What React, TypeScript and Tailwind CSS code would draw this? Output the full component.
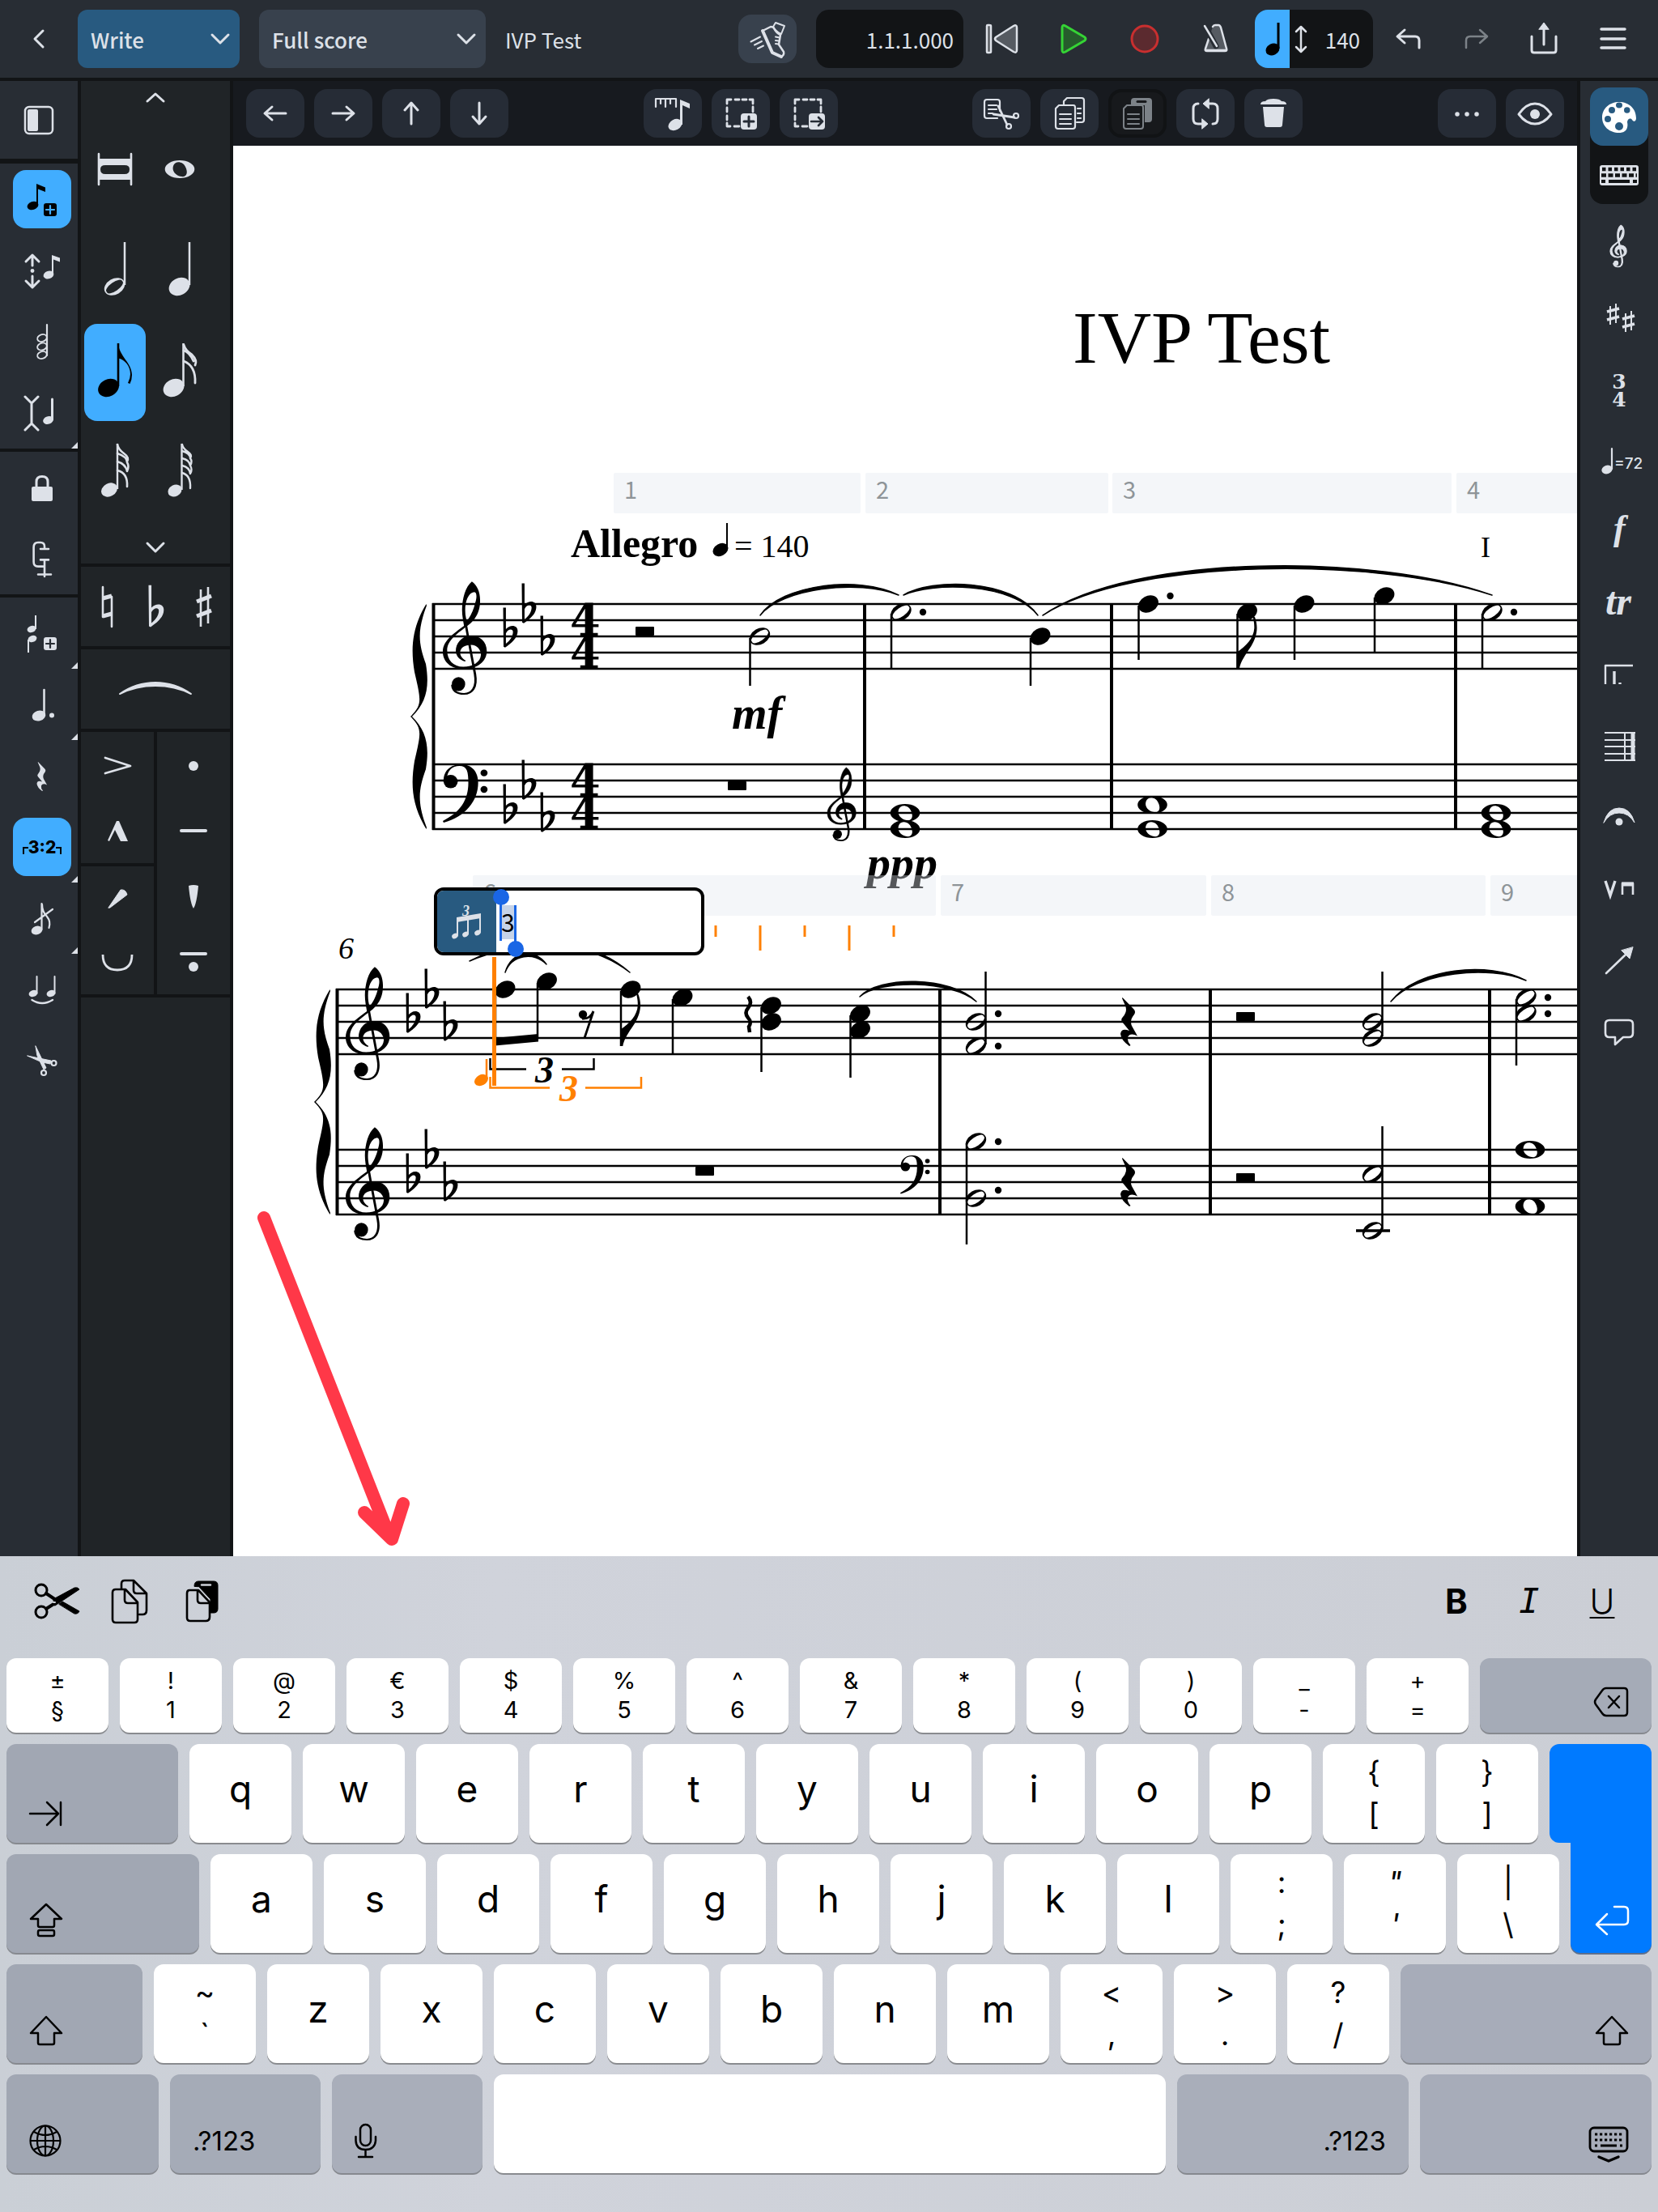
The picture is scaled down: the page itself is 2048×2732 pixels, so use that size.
import React, { useState } from 'react';

/**
 * Score editor: write mode with note toolbox, score canvas and on-screen keyboard
 */

const TOOL_FONT = "font-['Noto_Sans_CJK_SC','Noto_Sans',sans-serif]";

type Pt = [number, number];

interface IconProps {
  w?: number;
  h?: number;
  sw?: number;
  className?: string;
  children: React.ReactNode;
}

function Icon({ w = 72, h = 72, sw = 3, className = '', children }: IconProps) {
  return (
    <svg
      width={w}
      height={h}
      viewBox={`0 0 ${w} ${h}`}
      fill="none"
      stroke="currentColor"
      strokeWidth={sw}
      strokeLinecap="round"
      strokeLinejoin="round"
      className={`shrink-0 overflow-visible ${className}`}
      aria-hidden="true"
    >
      {children}
    </svg>
  );
}

/* ---------- music glyphs ---------- */

function Head({ x, y, rx = 13, ry = 10, a = -28 }: { x: number; y: number; rx?: number; ry?: number; a?: number }) {
  return <ellipse cx={x} cy={y} rx={rx} ry={ry} transform={`rotate(${a} ${x} ${y})`} fill="currentColor" stroke="none" />;
}

function HalfHead({ x, y, s = 1 }: { x: number; y: number; s?: number }) {
  return (
    <path
      transform={`translate(${x} ${y}) scale(${s}) rotate(-30)`}
      fill="currentColor"
      stroke="none"
      fillRule="evenodd"
      d="M-13.5,0A13.5,9.8 0 1 1 13.5,0A13.5,9.8 0 1 1 -13.5,0ZM-11.6,1A11.8,4.6 -5 1 0 11.6,-1A11.8,4.6 -5 1 0 -11.6,1Z"
    />
  );
}

function WholeHead({ x, y, s = 1 }: { x: number; y: number; s?: number }) {
  return (
    <path
      transform={`translate(${x} ${y}) scale(${s})`}
      fill="currentColor"
      stroke="none"
      fillRule="evenodd"
      d="M-18.3,0A18.3,11 0 1 1 18.3,0A18.3,11 0 1 1 -18.3,0ZM-8,-4C-6,-11 4,-10 7,-3C11,5 8,10 2,9C-5,8 -10,2 -8,-4Z"
    />
  );
}

function Stem({ x, y1, y2, w = 2.5 }: { x: number; y1: number; y2: number; w?: number }) {
  return <line x1={x} x2={x} y1={y1} y2={y2} stroke="currentColor" strokeWidth={w} strokeLinecap="butt" />;
}

function TrebleClef({ x, y, s = 1, bold = 0 }: { x: number; y: number; s?: number; bold?: number }) {
  return (
    <g transform={`translate(${x} ${y}) scale(${0.4847 * s} ${0.3444 * s}) translate(-138 -771)`}>
      <path
        fill="currentColor"
        stroke="currentColor"
        strokeWidth={bold}
        fillRule="evenodd"
        d="M212,458C196,475 187,520 187,560C187,580 190,600 192,617C165,645 138,670 138,710C138,748 160,772 190,772C226,772 250,745 250,708C250,672 232,652 208,652C185,655 171,680 171,708C172,725 180,740 195,745L196,741C186,733 182,722 182,712C183,695 193,685 210,685C226,685 236,705 235,722C234,747 215,764 190,764C165,764 149,740 149,705C149,668 175,645 207,610C226,585 233,560 233,525C233,495 225,470 212,458ZM199,600C190,560 196,500 218,496C226,497 224,520 221,532C216,562 209,582 199,600Z"
      />
      <path d="M195,600L202,655L220,790C226,838 212,861 192,861C174,861 163,850 162,828" fill="none" stroke="currentColor" strokeWidth={6 + bold} />
      <ellipse cx="178" cy="826" rx="17" ry="25" fill="currentColor" stroke="none" />
    </g>
  );
}

function BassClef({ x, y, s = 1 }: { x: number; y: number; s?: number }) {
  return (
    <g transform={`translate(${x} ${y}) scale(${0.4847 * s} ${0.3444 * s}) translate(-138 -1113)`} fill="currentColor" stroke="none">
      <ellipse cx="158" cy="1175" rx="18" ry="24" />
      <path d="M140,1178C138,1140 155,1113 185,1113C212,1113 228,1140 228,1178C228,1245 195,1300 140,1322L138,1316C183,1285 203,1240 203,1180C203,1140 200,1119 180,1119C162,1119 150,1135 148,1165Z" />
      <ellipse cx="243" cy="1144" rx="9" ry="12" />
      <ellipse cx="243" cy="1203" rx="9" ry="12" />
    </g>
  );
}

function Flat({ x, y, s = 1 }: { x: number; y: number; s?: number }) {
  return (
    <path
      transform={`translate(${x} ${y}) scale(${0.4847 * s} ${0.3444 * s}) translate(-294 -656)`}
      fill="currentColor"
      stroke="none"
      fillRule="evenodd"
      d="M293,553H300L300,630C312,612 330,616 330,637C330,662 314,680 298,696L294,693ZM300,645V682C310,672 318,655 318,640C318,628 306,628 300,645Z"
    />
  );
}

function QuarterRest({ x, y, s = 1 }: { x: number; y: number; s?: number }) {
  return (
    <path
      transform={`translate(${x} ${y}) scale(${s})`}
      fill="currentColor"
      stroke="none"
      d="M2.5,0L17,15Q19,18 17,21Q11,28 14,35L21,47.5Q12,43 9,49Q8,54 12.5,59L11,60Q1,53 0,45Q1,37 11,41L2,30Q0,27 3,24Q9,17 6,10L2,1Z"
    />
  );
}

function DownFlag({ x, y }: { x: number; y: number }) {
  return (
    <path
      transform={`translate(${x} ${y})`}
      fill="currentColor"
      d="M-1,0V-20.3C11,-28 20,-38 20.8,-50C21,-56 20,-60 19,-65L21.5,-64C25,-54 26,-43 17,-28C9,-16 4,-9 2.3,0Z"
    />
  );
}

function Brace({ x, y }: { x: number; y: number }) {
  const half = 'M19.5,0C2,29 0,54 5,84C13,119 15,124 0,139L2,139C19,122 24,104 19,74C10,49 8,34 20,2Z';
  return (
    <g fill="currentColor">
      <path transform={`translate(${x} ${y})`} d={half} />
      <path transform={`translate(${x} ${y + 278}) scale(1 -1)`} d={half} />
    </g>
  );
}

function Slur({ a, b, c, d }: { a: Pt; b: Pt; c: Pt; d: Pt }) {
  return (
    <path
      fill="currentColor"
      stroke="currentColor"
      strokeWidth={1.5}
      strokeLinejoin="round"
      d={`M${a}C${b} ${c} ${d}C${c[0]},${c[1] + 5} ${b[0]},${b[1] + 5} ${a}Z`}
    />
  );
}

/* ---------- score ---------- */

const staves = [
  { x: 534, ys: [746, 766, 786, 806, 826] },
  { x: 534, ys: [944, 964, 984, 1004, 1024] },
  { x: 415, ys: [1222, 1242, 1262, 1282, 1302] },
  { x: 415, ys: [1420, 1440, 1460, 1480, 1500] },
];

const barStrips = [
  { n: '1', x: 758, w: 305, y: 584 },
  { n: '2', x: 1069, w: 300, y: 584 },
  { n: '3', x: 1374, w: 419, y: 584 },
  { n: '4', x: 1799, w: 420, y: 584 },
  { n: '6', x: 584, w: 572, y: 1081 },
  { n: '7', x: 1162, w: 328, y: 1081 },
  { n: '8', x: 1496, w: 339, y: 1081 },
  { n: '9', x: 1841, w: 420, y: 1081 },
];

const stems = [
  [926.5, 788, 847], [1101, 758, 826], [1273, 788, 847], [1406.5, 748, 815], [1528.5, 758, 826],
  [1599, 748, 815], [1698, 738, 806], [1831, 758, 826],
  [612, 1224, 1288], [664, 1214, 1282], [767, 1224, 1292], [831, 1234, 1302], [940.5, 1244, 1324],
  [1050.5, 1254, 1331], [1217.5, 1200, 1290], [1194, 1412, 1537], [1707.5, 1200, 1280],
  [1707.5, 1391, 1518], [1873, 1234, 1316],
];

const heads: Pt[] = [
  [1285, 786], [1418.5, 746], [1540.5, 756], [1611, 746], [1710, 736],
  [624, 1222], [675.5, 1212], [779, 1222], [843, 1232], [952.5, 1242], [952.5, 1262], [1062.5, 1252], [1062.5, 1272],
];

const halves: Pt[] = [
  [938.5, 786], [1113, 756], [1843, 756], [1205.5, 1262], [1205.5, 1292], [1205.5, 1410], [1205.5, 1480],
  [1695.5, 1262], [1695.5, 1282], [1695.5, 1450], [1695.5, 1520], [1885, 1232], [1885, 1252],
];

const wholes: Pt[] = [
  [1118, 1004], [1118, 1024], [1423.5, 994], [1423.5, 1024], [1848, 1004], [1848, 1024], [1890, 1420], [1890, 1490],
];

const dots: Pt[] = [
  [1140, 756], [1445.5, 736], [1870, 756], [1233, 1252], [1233, 1292], [1233, 1410], [1233, 1470], [1912, 1232], [1912, 1252],
];

const flats: Pt[] = [
  [622, 786], [645, 756], [668, 796], [622, 1004], [645, 974], [668, 1014],
  [502, 1262], [525, 1232], [548, 1272], [502, 1460], [525, 1430], [548, 1470],
];

const rests = [
  [785, 774], [899, 965], [859, 1441], [1527, 1250], [1527, 1449],
];

const ticks = [
  [884, 1157], [939, 1174], [994, 1157], [1049, 1174], [1104, 1157],
];

function Score() {
  return (
    <svg width="1660" height="1742" viewBox="288 180 1660 1742" className="block max-w-none text-black" role="img" aria-label="Full score">
      <g className="font-['Liberation_Serif',serif]" fill="currentColor">
        <text x="1325" y="448" fontSize="92">IVP Test</text>
        <text x="705" y="688" fontSize="50" fontWeight="700">Allegro</text>
        <text x="907" y="688" fontSize="40">= 140</text>
        <text x="1829" y="688" fontSize="36">I</text>
        <text x="904" y="900" fontSize="56" fontWeight="700" fontStyle="italic">mf</text>
        <text x="1071" y="1085" fontSize="58" fontWeight="700" fontStyle="italic">ppp</text>
        <text x="418" y="1184" fontSize="38" fontStyle="italic">6</text>
        <text x="661" y="1337" fontSize="46" fontWeight="700" fontStyle="italic">3</text>
        <text x="691" y="1360" fontSize="46" fontWeight="700" fontStyle="italic" fill="#ff8000">3</text>
      </g>
      <Head x={890} y={679} rx={10} ry={7.5} />
      <Stem x={898} y1={646} y2={678} w={2} />

      {/* Pentagramas */}
      {staves.map((s, i) =>
        s.ys.map((y) => <line key={`${i}-${y}`} x1={s.x} x2={1948} y1={y} y2={y} stroke="#000" strokeWidth={2.4} />)
      )}
      {[535.5, 1068, 1373, 1798].map((x) => <Stem key={x} x={x} y1={745} y2={1025} w={4} />)}
      {[416.5, 1161, 1495, 1840].map((x) => <Stem key={x} x={x} y1={1221} y2={1501} w={4} />)}
      <Brace x={507} y={746} />
      <Brace x={388} y={1222} />

      {/* Claves y armadura */}
      <TrebleClef x={547} y={826} />
      <BassClef x={547} y={944} />
      <TrebleClef x={1022} y={1018} s={0.65} bold={2} />
      <TrebleClef x={427} y={1302} />
      <TrebleClef x={427} y={1500} />
      <BassClef x={1112} y={1427} s={0.66} />
      {flats.map(([x, y], i) => <Flat key={i} x={x} y={y} />)}
      <g className="font-['DejaVu_Serif',serif]" fontSize="54" fontWeight="700" fill="currentColor">
        {[785, 825, 983, 1023].map((y) => <text key={y} x={704} y={y}>4</text>)}
      </g>

      {/* Notas */}
      {stems.map(([x, y1, y2], i) => <Stem key={i} x={x} y1={y1} y2={y2} />)}
      {heads.map(([x, y], i) => <Head key={i} x={x} y={y} />)}
      {halves.map(([x, y], i) => <HalfHead key={i} x={x} y={y} />)}
      {wholes.map(([x, y], i) => <WholeHead key={i} x={x} y={y} />)}
      {dots.map(([x, y], i) => <circle key={i} cx={x} cy={y} r={4.2} />)}
      {rests.map(([x, y], i) => <rect key={i} x={x} y={y} width={23} height={11} rx={1} />)}
      <DownFlag x={1528.5} y={826} />
      <DownFlag x={767} y={1292} />
      <path d="M611,1282L665,1277V1286.500L611,1291.500Z" />
      <line x1={1675} x2={1717} y1={1520} y2={1520} stroke="#000" strokeWidth={3.5} />
      <QuarterRest x={1384} y={1232} />
      <QuarterRest x={1384} y={1430} />
      <circle cx={720} cy={1253} r={5.2} />
      <path d="M719,1258Q729,1259 733,1249L722,1282" fill="none" stroke="#000" strokeWidth={2.8} />
      <path d="M924,1231Q930,1238 924,1245Q919,1251 924,1257Q929,1262 925,1268L926,1275" fill="none" stroke="#000" strokeWidth={4.5} />

      <Slur a={[939, 760]} b={[965, 722]} c={[1060, 710]} d={[1110, 735]} />
      <Slur a={[1116, 735]} b={[1150, 714]} c={[1250, 714]} d={[1282, 760]} />
      <Slur a={[1288, 760]} b={[1400, 683]} c={[1700, 683]} d={[1843, 735]} />
      <Slur a={[580, 1187]} b={[630, 1160]} c={[720, 1150]} d={[778, 1201]} />
      <Slur a={[624, 1201]} b={[632, 1174]} c={[660, 1170]} d={[675, 1191]} />
      <Slur a={[1062, 1231]} b={[1085, 1205]} c={[1175, 1205]} d={[1206, 1237]} />
      <Slur a={[1718, 1237]} b={[1750, 1195]} c={[1840, 1187]} d={[1885, 1211]} />

      <path d="M605.500,1307V1320.500H650M694,1320.500H733.500V1307" fill="none" stroke="#000" strokeWidth={2.5} />
      <g stroke="#ff8000" fill="none" color="#ff8000">
        <path d="M605.500,1330V1343.500H679M723,1343.500H792V1330" strokeWidth={2.5} />
        <Head x={594.5} y={1334} rx={9} ry={6.5} />
        <Stem x={601} y1={1308} y2={1333} />
        <Stem x={610.5} y1={1182} y2={1341} w={5} />
        {ticks.map(([x, y]) => <Stem key={x} x={x} y1={1143} y2={y} w={3} />)}
      </g>

      {/* System track */}
      {barStrips.map((b) => (
        <g key={b.n}>
          <rect x={b.x} y={b.y} width={b.w} height={50} rx={2} fill="#e3e8ee" opacity={0.38} />
          <text x={b.x + 13} y={b.y + 32} fontSize="29" fill="#8e9498" className="font-['Noto_Sans_CJK_SC',sans-serif]">{b.n}</text>
        </g>
      ))}

      <path d="M326,1504L481,1898M450,1868L484,1901L498,1857" fill="none" stroke="#ff3848" strokeWidth={16} strokeLinecap="round" strokeLinejoin="round" />
    </svg>
  );
}

function TupletPopover() {
  const [value, setValue] = useState('3');

  return (
    <div className="absolute left-[248px] top-[916px] flex h-[84px] w-[334px] rounded-xl border-4 border-black bg-white">
      <div className="flex w-[73px] items-center justify-center rounded-l-lg bg-[#285a80] text-[#dde1e8]">
        <Icon w={48} h={60} sw={2}>
          <text x="18" y="23" fontSize="18" fontStyle="italic" fontWeight="700" fill="currentColor" stroke="none" className="font-['Liberation_Serif',serif]">3</text>
          <path d="M12,47V27M25,45V25M40,43V23" />
          <path d="M11,25L41,20V26L11,31Z" fill="currentColor" stroke="none" />
          <Head x={9} y={48} rx={4} ry={3} />
          <Head x={22} y={46} rx={4} ry={3} />
          <Head x={37} y={44} rx={4} ry={3} />
        </Icon>
      </div>
      <div className="relative flex-1">
        <div className="absolute left-1.5 top-[18px] h-[42px] w-[18px] bg-[#c6d3e8]" />
        <input
          aria-label="Tuplet ratio"
          value={value}
          onChange={(e) => setValue(e.target.value)}
          className={`relative h-full w-full bg-transparent pl-1.5 text-[30px] text-black outline-none ${TOOL_FONT}`}
        />
        <div className="absolute left-1 top-2 h-[54px] w-[3px] bg-[#1a66e5]" />
        <div className="absolute -left-1 -top-0.5 size-5 rounded-full bg-[#1a66e5]" />
        <div className="absolute left-[22px] top-[18px] h-[54px] w-[3px] bg-[#1a66e5]" />
        <div className="absolute left-3.5 top-[62px] size-5 rounded-full bg-[#1a66e5]" />
      </div>
    </div>
  );
}

/* ---------- top bar ---------- */

function Dropdown({ label, value, className }: { label: string; value: string; className: string }) {
  return (
    <div className={`relative h-[72px] rounded-xl ${className}`}>
      <select aria-label={label} className="h-full w-full appearance-none bg-transparent pl-4 text-[26px] font-medium outline-none">
        <option>{value}</option>
      </select>
      <Icon w={24} h={24} className="pointer-events-none absolute right-3 top-6">
        <path d="M2,7L12,17L22,7" />
      </Icon>
    </div>
  );
}

function TopBar() {
  return (
    <header className={`flex h-[100px] shrink-0 items-center border-b-4 border-[#121416] bg-[#282d34] text-[#dde1e8] ${TOOL_FONT}`}>
      <button aria-label="Back" className="flex w-24 justify-center">
        <Icon w={24} h={24}><path d="M17,2L7,12L17,22" /></Icon>
      </button>
      <Dropdown label="Mode" value="Write" className="w-[200px] bg-[#285a80]" />
      <Dropdown label="Layout" value="Full score" className="ml-6 w-[280px] bg-[#38414d]" />
      <span className="ml-6 text-[26px]">IVP Test</span>

      <button aria-label="Step input" className="ml-auto mr-6 flex h-15 w-[72px] items-center justify-center rounded-2xl bg-[#38414d]">
        <Icon w={72} h={60} sw={2}>
          <path d="M43,15L46,10L57,14L53,24Q46,21 43,15Z" />
          <path d="M30,20L40,15Q43,15 44,17Q47,23 52,25L50,37L56,46Q57,50 53,52" strokeWidth={2.5} />
          <path d="M30,20L42,47L53,52" strokeWidth={4} />
          <path d="M46,27.500L51,28.500M46,32L50,32.500M46,36L50,36.500M15.500,33.500L27,27.500M20,37.500L29,33M24,42L31,38.500" />
        </Icon>
      </button>
      <div className="flex h-[72px] w-[182px] items-center justify-end rounded-2xl bg-[#121416] pr-3 text-[26px]">1.1.1.000</div>

      <div className="mx-1 flex items-center">
        <button aria-label="Rewind" className="flex w-[88px] justify-center">
          <Icon w={44} h={44} sw={2.5}>
            <path d="M3,6Q3,5 4,5H6Q8,5 8,6V38Q8,39 6,39H4Q3,39 3,38Z" fill="#5a5d62" />
            <path d="M14,20L36,6Q40,4 40,8V36Q40,40 36,38L14,24Q12,22 14,20Z" fill="#565b62" />
          </Icon>
        </button>
        <button aria-label="Play" className="flex w-[88px] justify-center text-[#35d435]">
          <Icon w={44} h={44}>
            <path d="M8,8Q8,4 12,6L36,20Q38,22 36,24L12,38Q8,40 8,36Z" fill="#265c2c" />
          </Icon>
        </button>
        <button aria-label="Record" className="flex w-[88px] justify-center text-[#c92f2f]">
          <Icon w={44} h={44}><circle cx="22" cy="22" r="16" fill="#5b2a2f" /></Icon>
        </button>
        <button aria-label="Click" className="flex w-[88px] justify-center">
          <Icon w={44} h={44} sw={2.5}>
            <path d="M18,7Q19,5 21,5H25Q27,5 28,8L35,34Q36,37 33,37H11Q8,37 9,34L13,22" fill="#565b62" />
            <path d="M9,7L22,31" stroke="#282d34" strokeWidth={7} />
            <path d="M8,6L23,31M9,36H35" />
          </Icon>
        </button>
      </div>
      <div className="flex h-[72px] w-[146px] items-center overflow-hidden rounded-2xl bg-[#121416]">
        <div className="flex h-full w-[43px] bg-[#41adff] text-black">
          <Icon w={43} h={72}>
            <Head x={22} y={49} rx={9} ry={7} />
            <Stem x={29} y1={16} y2={48} w={3} />
          </Icon>
        </div>
        <Icon w={28} h={40} sw={2.5}><path d="M14,6V35M8,11L14,5L20,11M8,30L14,36L20,30" /></Icon>
        <span className="ml-auto mr-4 text-[26px]">140</span>
      </div>
      <button aria-label="Undo" className="flex w-22 justify-center">
        <Icon w={36} h={36}><path d="M13,7L4,15L13,23M5,15H26Q31,15 31,20V29" /></Icon>
      </button>
      <button aria-label="Redo" className="flex w-[78px] justify-center text-[#7c8288]">
        <Icon w={36} h={36} sw={2.5}><path d="M23,7L32,15L23,23M31,15H11Q6,15 6,20V29" /></Icon>
      </button>
      <button aria-label="Export" className="flex w-[90px] justify-center">
        <Icon w={44} h={44}>
          <path d="M7,19V36Q7,39 10,39H34Q37,39 37,36V19M22,8V29" />
          <path d="M16,10L22,2L28,10Z" fill="currentColor" strokeWidth={1} />
        </Icon>
      </button>
      <button aria-label="Menu" className="mr-3 flex w-[84px] justify-center">
        <Icon w={36} h={36} sw={3.5}><path d="M2,6H31M2,18H31M2,29H31" /></Icon>
      </button>
    </header>
  );
}

/* ---------- score toolbar ---------- */

function PageLines({ x, y }: { x: number; y: number }) {
  return <path d={`M${x},${y}H${x + 14}M${x},${y + 6}H${x + 14}M${x},${y + 12}H${x + 14}`} strokeWidth={2} />;
}

const selectionBox = (
  <>
    <path d="M19,18V13H24M29,13H34M38,13H43M47,13H51V18M51,22V28M19,23V28M19,33V38M19,42V46H23M28,46H34" strokeWidth={2.8} />
    <rect x="36" y="30" width="20" height="20" rx="4" fill="currentColor" stroke="none" />
  </>
);

const actionGroups = [
  [
    { name: 'Move left', icon: <path d="M24,30H49M32,22L23,30L32,38" /> },
    { name: 'Move right', icon: <path d="M23,30H48M40,22L49,30L40,38" /> },
    { name: 'Move up', icon: <path d="M36,18V43M28,26L36,17L44,26" /> },
    { name: 'Move down', icon: <path d="M36,17V42M28,34L36,43L44,34" /> },
  ],
  [
    {
      name: 'Rhythmic grid',
      icon: (
        <>
          <path d="M15,22V12H40V22M21,12V18M27,12V22M33,12V18" strokeWidth={2.2} />
          <path d="M45,13L57,18V24L48,20V44H45Z" fill="currentColor" stroke="none" />
          <Head x={39} y={44} rx={9} ry={6.5} />
        </>
      ),
    },
    { name: 'Select more', icon: <>{selectionBox}<path d="M46,34V46M40,40H52" stroke="#262c36" /></> },
    { name: 'Select to end', icon: <>{selectionBox}<path d="M39,40H53M48,35L53,40L48,45" stroke="#262c36" strokeWidth={2.6} /></> },
  ],
  [
    {
      name: 'Cut',
      icon: (
        <>
          <path d="M34,27V16Q34,13 31,13H18Q15,13 15,16V33Q15,36 18,36H31" strokeWidth={2.2} />
          <path d="M20,20H30M20,25H30M20,30H25" strokeWidth={2.2} />
          <path d="M32,21L43,44M26,31L52,35" strokeWidth={2.8} />
          <circle cx="54" cy="33" r="3" strokeWidth={2.2} />
          <circle cx="45" cy="46" r="3" strokeWidth={2.2} />
        </>
      ),
    },
    {
      name: 'Copy',
      icon: (
        <>
          <path d="M29,19V15L33,11H51Q54,11 54,14V38Q54,41 51,41H45M46,24H50M46,30H50M46,36H50" strokeWidth={2.2} />
          <path d="M19,24L23,20H41Q43,20 43,23V46Q43,49 40,49H22Q19,49 19,46Z" strokeWidth={2.2} />
          <PageLines x={24} y={31} />
        </>
      ),
    },
    {
      name: 'Paste',
      disabled: true,
      icon: (
        <>
          <path d="M28,20V15Q28,11 32,11H50Q54,11 54,15V37Q54,41 50,41H45V20Z" fill="currentColor" stroke="none" />
          <path d="M36,15.500H46" stroke="#17191c" />
          <path d="M19,24L23,20H41Q43,20 43,23V46Q43,49 40,49H22Q19,49 19,46Z" strokeWidth={2} />
          <PageLines x={24} y={31} />
        </>
      ),
    },
    {
      name: 'Repeat',
      icon: (
        <>
          <path d="M27,18Q21,18 21,24V37Q21,43 27,43H32M45,43Q51,43 51,37V24Q51,18 45,18H40" />
          <path d="M40,12L33,18L40,24Z M32,37L39,43L32,49Z" fill="currentColor" strokeWidth={1} />
        </>
      ),
    },
    {
      name: 'Delete',
      icon: <path d="M20,19Q20,15 26,15Q28,12 36,12Q44,12 46,15Q52,15 52,19ZM23,22H49L47,44Q47,47 44,47H28Q25,47 25,44Z" fill="currentColor" stroke="none" />,
    },
  ],
  [
    { name: 'More', icon: <path d="M24,31V31.100M36,31V31.100M48,31V31.100" strokeWidth={5.5} /> },
    {
      name: 'View options',
      icon: (
        <>
          <path d="M16,31Q25,18 36,18Q47,18 56,31Q47,43 36,43Q25,43 16,31Z" />
          <circle cx="36" cy="31" r="6" fill="currentColor" stroke="none" />
        </>
      ),
    },
  ],
];

function ScoreToolbar() {
  return (
    <div className="flex h-20 items-center justify-between bg-[#171a1f] px-4 text-[#dde1e8]">
      {actionGroups.map((group, i) => (
        <div key={i} className="flex gap-3">
          {group.map((a: { name: string; icon: React.ReactNode; disabled?: boolean }) => (
            <button
              key={a.name}
              aria-label={a.name}
              disabled={a.disabled}
              className={`rounded-2xl ${a.disabled ? 'border-4 border-[#111315] bg-[#17191c] text-[#7c8288]' : 'bg-[#262c36]'}`}
            >
              <Icon h={60} className={a.disabled ? '-m-1' : ''}>{a.icon}</Icon>
            </button>
          ))}
        </div>
      ))}
    </div>
  );
}

/* ---------- left toolboxes ---------- */

const plusBox = (y: number, inner: string) => (
  <>
    <rect x="38" y={y} width="16" height="16" rx="3" fill="currentColor" stroke="none" />
    <path d={`M46,${y + 3}V${y + 13}M41,${y + 8}H51`} stroke={inner} strokeWidth={2.2} />
  </>
);

const toolGroups = [
  [
    {
      name: 'Start note input',
      active: true,
      icon: (
        <>
          <Head x={24.5} y={44} rx={7} ry={5} a={-18} />
          <path d="M29,17L40,21.500V27L31,23.500V44H29Z" fill="currentColor" stroke="none" />
          {plusBox(41, '#41adff')}
        </>
      ),
    },
    {
      name: 'Shift pitch',
      icon: (
        <>
          <path d="M24,17V30M16,25L24,17L32,25M24,43V56M16,49L24,57L32,49" />
          <circle cx="24" cy="36.500" r="2.400" fill="currentColor" stroke="none" />
          <Head x={44} y={41.5} rx={6.5} ry={4.8} a={-18} />
          <path d="M48,17L58,20.500V25.500L50,22.500V42H48Z" fill="currentColor" stroke="none" />
        </>
      ),
    },
    {
      name: 'Chords',
      icon: (
        <>
          <path d="M42,15V53" strokeWidth={2.2} />
          {[31.5, 42, 52.5].map((y) => <ellipse key={y} cx="36" cy={y} rx="6" ry="4.400" transform={`rotate(-18 36 ${y})`} strokeWidth={1.8} />)}
        </>
      ),
    },
    {
      name: 'Insert',
      corner: true,
      icon: (
        <>
          <path d="M15,16L23,24L31,16M23,24V49M15,57L23,49L31,57" />
          <Head x={43.5} y={45} rx={6.5} ry={4.8} a={-18} />
          <path d="M48.500,19V44" />
        </>
      ),
    },
  ],
  [
    {
      name: 'Lock duration',
      icon: (
        <>
          <rect x="23" y="35" width="26" height="18" rx="2" fill="currentColor" stroke="none" />
          <path d="M29,35V29Q29,22.500 36,22.500Q43,22.500 43,29V35" />
        </>
      ),
    },
    {
      name: 'Force duration',
      icon: <path d="M39,24V21Q39,16 34,16H31Q25.600,16 25.600,22V40Q25.600,45.600 31,45.600H39M34,24H44M34,37.400H44M39,37.400V58M31,55.500H47" strokeWidth={2.6} />,
    },
  ],
  [
    {
      name: 'Add voice',
      corner: true,
      icon: (
        <>
          <Head x={23} y={31} rx={5.5} ry={4} a={-18} />
          <Head x={24} y={43} rx={5.5} ry={4} a={-18} />
          <path d="M28,14V31M19,44V60" strokeWidth={2} strokeLinecap="butt" />
          {plusBox(41, '#282d34')}
        </>
      ),
    },
    {
      name: 'Rhythm dots',
      corner: true,
      icon: (
        <>
          <Head x={32} y={50} rx={8.5} ry={6.3} a={-18} />
          <path d="M38.500,18V49" strokeWidth={2.6} />
          <circle cx="48" cy="49.500" r="3" fill="currentColor" stroke="none" />
        </>
      ),
    },
    { name: 'Rests', icon: <QuarterRest x={29.5} y={19} s={0.6} /> },
    {
      name: 'Tuplets',
      active: true,
      corner: true,
      icon: (
        <>
          <path d="M13,45V37H19M59,45V37H53" strokeWidth={2} strokeLinecap="butt" strokeLinejoin="miter" />
          <text x="36" y="44" textAnchor="middle" fontSize="21" fontWeight="800" fill="currentColor" stroke="none" className="font-['Inter',sans-serif]">3:2</text>
        </>
      ),
    },
    {
      name: 'Grace notes',
      corner: true,
      icon: (
        <>
          <Head x={29.5} y={51} rx={7} ry={5.3} a={-18} />
          <path d="M35.500,18V50M36,19Q36,28 42,34Q47,40 44.500,48M27,41L49,25" strokeWidth={2.2} />
        </>
      ),
    },
    {
      name: 'Tie',
      icon: (
        <>
          <Head x={25} y={41} rx={5.5} ry={4} a={-18} />
          <Head x={47} y={41} rx={5.5} ry={4} a={-18} />
          <path d="M29.500,20V41M51.500,20V41" strokeWidth={2} />
          <path d="M23.500,49Q36,57 49,49" strokeWidth={2.4} />
        </>
      ),
    },
    {
      name: 'Scissors',
      icon: (
        <>
          <path d="M28,18L41,45L38,47L30,30ZM18,30L47,36L46,40L36,38Z" fill="currentColor" strokeWidth={1} />
          <circle cx="38" cy="51" r="3" strokeWidth={2.2} />
          <circle cx="50.500" cy="39" r="3" strokeWidth={2.2} />
        </>
      ),
    },
  ],
];

function LeftToolbar() {
  return (
    <nav className="w-25 shrink-0 border-r-4 border-[#121416] bg-[#282d34] text-[#dde1e8]">
      <button aria-label="Toggle panel" className="flex h-24 w-full items-center justify-center">
        <Icon w={40} h={40} sw={2.5}>
          <rect x="3" y="4" width="34" height="33" rx="5" />
          <rect x="6" y="7" width="13" height="27" rx="2" fill="currentColor" stroke="none" />
        </Icon>
      </button>
      {toolGroups.map((group, i) => (
        <div key={i} className={`border-[#121416] ${i === 0 ? 'border-t-6' : 'border-t-4'}`}>
          {group.map((t: { name: string; icon: React.ReactNode; active?: boolean; corner?: boolean }) => (
            <div key={t.name} className="relative flex h-22 items-center pl-4">
              <button aria-label={t.name} className={`rounded-2xl ${t.active ? 'bg-[#41adff] text-black' : ''}`}>
                <Icon>{t.icon}</Icon>
              </button>
              {t.corner && (
                <svg width="8" height="8" viewBox="0 0 8 8" className="absolute bottom-0 right-0" aria-hidden="true">
                  <path d="M8,0V8H0Z" fill="currentColor" />
                </svg>
              )}
            </div>
          ))}
        </div>
      ))}
    </nav>
  );
}

const eighthFlag = 'M42,24C43,40 59,48 59,63Q59,69 56.500,74L54,73Q57,67 57,62C57,52 50,44 42,42.500Z';

const durations = [
  {
    name: 'Double whole',
    icon: (
      <>
        <path d="M19,44H57V70H19ZM26,52Q20,52 20,57Q20,63 26,63H50Q56,63 56,57Q56,52 50,52Z" fill="currentColor" stroke="none" fillRule="evenodd" />
        <path d="M18,38V76M58,38V76" strokeWidth={2.6} />
      </>
    ),
  },
  { name: 'Whole', icon: <WholeHead x={38} y={57} /> },
  { name: 'Half', icon: <><HalfHead x={37.5} y={78} /><Stem x={50} y1={23} y2={76} /></> },
  { name: 'Quarter', icon: <><Head x={37.5} y={78} rx={13.5} ry={10.5} /><Stem x={50} y1={23} y2={76} /></> },
  { name: 'Eighth', active: true, icon: <><Head x={30} y={79} rx={13.5} ry={10.5} /><Stem x={42} y1={24} y2={77} w={2.6} /><path d={eighthFlag} fill="currentColor" stroke="none" /></> },
  {
    name: 'Sixteenth',
    icon: (
      <>
        <Head x={30.5} y={79} rx={13.5} ry={10.5} />
        <Stem x={42.5} y1={24} y2={77} w={2.6} />
        <path d="M43,26Q45,33 53,38Q60,45 57,51M43,33Q50,35 55,46M43,46Q58,52 57,73" strokeWidth={2.8} />
      </>
    ),
  },
  {
    name: 'Thirty-second',
    icon: (
      <>
        <Head x={31} y={81} rx={10.5} ry={8} />
        <Stem x={41} y1={24} y2={80} w={2.4} />
        <path d="M41,25Q42,31 49,36Q56,41 53,46M41,36Q53,40 53,47Q56,52 53,58M41,46Q51,49 53,58M41,57Q54,60 53,77" strokeWidth={2.6} />
      </>
    ),
  },
  {
    name: 'Sixty-fourth',
    icon: (
      <>
        <Head x={32} y={82} rx={9} ry={7} />
        <Stem x={40.5} y1={24} y2={81} w={2.4} />
        <path d="M41,25Q42,30 48,34Q54,38 51,42M41,33Q51,36 51,42Q54,46 51,51M41,42Q50,44 51,51Q54,56 51,61M41,51Q50,53 51,61M41,60Q52,63 51,79" strokeWidth={2.4} />
      </>
    ),
  },
];

function NotePalette() {
  return (
    <div className="w-47 shrink-0 border-r-4 border-[#121416] bg-[#202427] text-[#dde1e8]">
      <button aria-label="Longer durations" className="flex h-13 w-full items-center justify-center pb-3">
        <Icon w={24} h={24}><path d="M2,17L12,8L22,17" /></Icon>
      </button>
      <div className="grid grid-cols-[76px_76px] gap-1 pl-1">
        {durations.map((d) => (
          <button key={d.name} aria-label={d.name} className={`rounded-2xl ${d.active ? 'bg-[#41adff] text-black' : ''}`}>
            <Icon w={76} h={120}>{d.icon}</Icon>
          </button>
        ))}
      </div>
      <button aria-label="Shorter durations" className="flex h-13 w-full items-center justify-center pt-3">
        <Icon w={24} h={24}><path d="M2,7L12,17L22,7" /></Icon>
      </button>
      <div className="flex h-[102px] items-center justify-between border-t-4 border-[#121416] px-4">
        <button aria-label="Natural">
          <Icon w={30} h={50} sw={2.6}><path d="M11,1V38M22,13V50" /><path d="M11,15L22,12M11,37L22,34" strokeWidth={5} strokeLinecap="butt" /></Icon>
        </button>
        <button aria-label="Flat"><Icon w={30} h={50}><Flat x={7} y={36} s={1.05} /></Icon></button>
        <button aria-label="Sharp">
          <Icon w={30} h={50} sw={2.6}><path d="M10,4V50M19,1V46" strokeLinecap="butt" /><path d="M5,19L23,12M5,37L23,30" strokeWidth={5} strokeLinecap="butt" /></Icon>
        </button>
      </div>
      <button aria-label="Slur" className="flex h-[102px] w-full items-center justify-center border-t-4 border-[#121416]">
        <Icon w={96} h={24} sw={2}><path d="M4,18Q24,4 48,4Q72,4 92,18Q72,8 48,8Q24,8 4,18Z" fill="currentColor" /></Icon>
      </button>
      <div className="flex border-y-4 border-[#121416]">
        <div className="flex flex-1 flex-col border-r-4 border-[#121416]">
          <button aria-label="Accent" className="flex h-[81px] items-center justify-center">
            <Icon w={40} h={30}><path d="M5,6L36,16L5,25" strokeWidth={2.8} /></Icon>
          </button>
          <button aria-label="Marcato" className="flex h-[81px] items-center justify-center">
            <Icon w={30} h={30}><path d="M3,27L14,3H17L28,28H19L12,14L5,28Z" fill="currentColor" stroke="none" /></Icon>
          </button>
          <button aria-label="Stressed" className="flex h-[81px] items-center justify-center border-t-4 border-[#121416]">
            <Icon w={30} h={30}><path d="M4,27L19,5Q25,4 27,11L6,27Z" fill="currentColor" strokeWidth={1} /></Icon>
          </button>
          <button aria-label="Unstressed" className="flex h-[81px] items-center justify-center">
            <Icon w={44} h={30}><path d="M4,6Q4,25 22,25Q40,25 40,6" strokeWidth={2.8} strokeLinecap="butt" /></Icon>
          </button>
        </div>
        <div className="flex flex-1 flex-col">
          <button aria-label="Staccato" className="flex h-[81px] items-center justify-center">
            <Icon w={40} h={30}><circle cx="20" cy="16" r="6" fill="currentColor" stroke="none" /></Icon>
          </button>
          <button aria-label="Tenuto" className="flex h-[81px] items-center justify-center">
            <Icon w={40} h={30}><path d="M5,15H35" strokeWidth={4} /></Icon>
          </button>
          <button aria-label="Staccatissimo" className="flex h-[81px] items-center justify-center">
            <Icon w={40} h={30}><path d="M14,2Q20,0 26,2Q24,24 20,30Q16,24 14,2Z" fill="currentColor" stroke="none" /></Icon>
          </button>
          <button aria-label="Tenuto staccato" className="flex h-[81px] items-center justify-center">
            <Icon w={40} h={30}><path d="M5,5H35" strokeWidth={4} /><circle cx="20" cy="21" r="6" fill="currentColor" stroke="none" /></Icon>
          </button>
        </div>
      </div>
    </div>
  );
}

/* ---------- right toolbox ---------- */

const serif = "font-['Liberation_Serif',serif]";

const notations = [
  { name: 'Clefs', icon: <TrebleClef x={25} y={48} s={0.37} bold={7} /> },
  {
    name: 'Key signatures',
    icon: (
      <>
        <path d="M25,20V43M32,17V41M44,29V52M51,26V50" strokeWidth={2} strokeLinecap="butt" />
        <path d="M21,27L36,23M21,37L36,33M40,36L55,32M40,46L55,42" strokeWidth={3.6} strokeLinecap="butt" />
      </>
    ),
  },
  {
    name: 'Time signatures',
    icon: (
      <g fontSize="25" fontWeight="700" fill="currentColor" stroke="none" textAnchor="middle" className="font-['DejaVu_Serif',serif]">
        <text x="36" y="34">3</text>
        <text x="36" y="56">4</text>
      </g>
    ),
  },
  {
    name: 'Tempo',
    icon: (
      <>
        <Head x={21} y={46} rx={6.8} ry={5.2} a={-18} />
        <path d="M27,20V45" strokeWidth={2.2} />
        <text x="30" y="45" fontSize="19" fontWeight="500" fill="currentColor" stroke="none" className="font-['Inter',sans-serif]">=72</text>
      </>
    ),
  },
  { name: 'Dynamics', icon: <text x="29" y="45" fontSize="44" fontWeight="700" fontStyle="italic" fill="currentColor" stroke="none" className={serif}>f</text> },
  { name: 'Ornaments', icon: <text x="19" y="49" fontSize="48" fontWeight="700" fontStyle="italic" fill="currentColor" stroke="none" className={serif}>tr</text> },
  {
    name: 'Repeat structures',
    icon: (
      <>
        <path d="M19,47V24H53" strokeWidth={2.4} strokeLinecap="butt" />
        <path d="M30,31V47M37,45V47" strokeWidth={3.4} strokeLinecap="butt" />
      </>
    ),
  },
  {
    name: 'Bars and barlines',
    icon: (
      <>
        <path d="M18,19H56M18,28H56M18,36H56M18,45H56M18,53H56M43,19V53" strokeWidth={2} strokeLinecap="butt" />
        <path d="M53,18V54" strokeWidth={5} strokeLinecap="butt" />
      </>
    ),
  },
  {
    name: 'Holds and pauses',
    icon: (
      <>
        <path d="M17,42Q22,24 36,24Q50,24 55,42Q48,30 36,30Q24,30 17,42Z" fill="currentColor" strokeWidth={1} />
        <circle cx="36" cy="41" r="4.500" fill="currentColor" stroke="none" />
      </>
    ),
  },
  {
    name: 'Playing techniques',
    icon: (
      <>
        <path d="M19,26L25,44L31,26" strokeLinejoin="miter" strokeWidth={3.4} strokeLinecap="butt" />
        <path d="M40,43V29H53V43" strokeWidth={2.6} strokeLinecap="butt" />
        <path d="M39,30H54" strokeWidth={5} strokeLinecap="butt" />
      </>
    ),
  },
  {
    name: 'Lines',
    icon: (
      <>
        <path d="M20,52L44,29" strokeWidth={2.6} />
        <path d="M53,20L49,34L39,24Z" fill="currentColor" strokeWidth={1} />
      </>
    ),
  },
  { name: 'Comments', icon: <path d="M24,22H48Q53,22 53,27V38Q53,43 48,43H41L31,52L31,43H24Q19,43 19,38V27Q19,22 24,22Z" strokeWidth={2.6} /> },
];

function RightToolbar() {
  return (
    <nav className="w-25 shrink-0 border-l-4 border-[#121416] bg-[#282d34] px-3 pt-2 text-[#dde1e8]">
      <div className="rounded-2xl bg-[#121416]">
        <button aria-label="Notations" className="block rounded-2xl bg-[#285a80] text-white">
          <Icon>
            <path
              d="M36,18C48,18 57,26 57,38C57,42 54,43 52,40C50,37 46,39 46,43C47,47 47,56 36,56C24,56 15,48 15,37C15,26 24,18 36,18ZM32,22A3.800,3.300 0 1 0 40,22A3.800,3.300 0 1 0 32,22ZM42,28A3.600,3.600 0 1 0 49.500,28A3.600,3.600 0 1 0 42,28ZM23,28A4,4 0 1 0 31,28A4,4 0 1 0 23,28ZM18,39A4,4 0 1 0 26,39A4,4 0 1 0 18,39ZM31,48A5,5 0 1 0 41,48A5,5 0 1 0 31,48Z"
              fill="currentColor"
              stroke="none"
              fillRule="evenodd"
            />
          </Icon>
        </button>
        <button aria-label="Keyboard" className="block">
          <Icon>
            <rect x="12" y="24" width="48" height="25" rx="3" fill="currentColor" stroke="none" />
            <path d="M15,29H57" stroke="#121416" strokeWidth={4.5} strokeDasharray="4.500 3" strokeLinecap="butt" />
            <path d="M14,36.500H58" stroke="#121416" strokeWidth={4.5} strokeDasharray="6 2.500" strokeLinecap="butt" />
            <path d="M14,44H19M23,44H49M53,44H58" stroke="#121416" strokeWidth={4} strokeLinecap="butt" />
          </Icon>
        </button>
      </div>
      <div className="mt-2.5 flex flex-col">
        {notations.map((n) => (
          <button key={n.name} aria-label={n.name} className="flex h-22 items-center">
            <Icon>{n.icon}</Icon>
          </button>
        ))}
      </div>
    </nav>
  );
}

/* ---------- on-screen keyboard ---------- */

const row1 = ['±§', '!1', '@2', '€3', '$4', '%5', '^6', '&7', '*8', '(9', ')0', '_-', '+='];
const row2 = ['q', 'w', 'e', 'r', 't', 'y', 'u', 'i', 'o', 'p', '{[', '}]'];
const row3 = ['a', 's', 'd', 'f', 'g', 'h', 'j', 'k', 'l', ':;', '"\'', '|\\'];
const row4 = ['~`', 'z', 'x', 'c', 'v', 'b', 'n', 'm', '<,', '>.', '?/'];

function Key({ label, small }: { label: string; small?: boolean }) {
  const pair = label.length === 2;
  const size = small ? 'text-[29px] leading-9' : 'text-[37px] leading-[52px]';
  return (
    <button className="flex min-w-0 flex-[126] flex-col items-center justify-center rounded-xl bg-white shadow-[0_2px_0_#898b8f]">
      {pair ? (
        <span className={`flex flex-col items-center ${size} ${label[0] === '"' ? 'italic' : ''}`}>
          <span>{label[0]}</span>
          <span>{label[1]}</span>
        </span>
      ) : (
        <span className="pb-3 text-[46px] leading-none">{label}</span>
      )}
    </button>
  );
}

function DarkKey({ name, className, children }: { name: string; className: string; children: React.ReactNode }) {
  return (
    <button aria-label={name} className={`flex min-w-0 items-end rounded-xl shadow-[0_2px_0_#86898f] ${className}`}>
      <span className="flex px-7">{children}</span>
    </button>
  );
}

function ShiftIcon() {
  return <Icon w={42} h={48} sw={2.5}><path d="M21,5L40,25H31V37Q31,39 29,39H13Q11,39 11,37V25H2Z" /></Icon>;
}

function Keyboard() {
  return (
    <section
      aria-label="Keyboard"
      className="shrink-0 bg-linear-to-r from-[#cacfd6] via-[#d0d3db] via-30% to-[#cbced5] pb-12 font-['Inter',sans-serif] text-black"
    >
      <div className="flex h-[126px] items-center justify-between pb-3.5 pl-10 pr-6">
        <div className="flex items-center gap-10">
          <button aria-label="Cut">
            <Icon w={56} h={48} sw={3}>
              <circle cx="11" cy="10" r="7" />
              <circle cx="11" cy="37" r="7" />
              <path d="M17,14L29,22M17,33L28,26" strokeWidth={4} />
              <path d="M26,21L52,7Q56,6 58,9L28,29ZM33,27L37,24L58,36Q56,40 52,39Z" fill="currentColor" strokeWidth={1} />
              <path d="M26,25H28" stroke="#cdd1d8" strokeWidth={2} />
            </Icon>
          </button>
          <button aria-label="Copy">
            <Icon w={48} h={58} sw={2.6}>
              <path d="M14,13V7Q14,3 18,3H29L45,19V40Q45,45 40,45H36M29,3V15Q29,19 33,19H45" />
              <path d="M7,14H19L34,30V51Q34,55 30,55H7Q3,55 3,51V18Q3,14 7,14ZM18,14V27Q18,31 22,31H34" />
            </Icon>
          </button>
          <button aria-label="Paste">
            <Icon w={48} h={58} sw={2.6}>
              <path d="M16,10Q16,4 21,4H40Q45,4 45,9V38Q45,43 40,43H36V26L22,11Z" fill="currentColor" strokeWidth={1} />
              <path d="M25,8.500H36" stroke="#cdd1d8" strokeWidth={2.4} />
              <path d="M10,15H21L35,30V48Q35,53 30,53H11Q7,53 7,49V19Q7,15 10,15ZM20,15V27Q20,31 24,31H35" />
            </Icon>
          </button>
        </div>
        <div className="flex items-center text-[42px] leading-none">
          <button aria-label="Bold" className="w-[90px] font-bold">B</button>
          <button aria-label="Italic" className="w-[90px] font-['DejaVu_Sans_Mono',monospace] italic">I</button>
          <button aria-label="Underline" className="w-[90px] font-light underline decoration-2 underline-offset-4">U</button>
        </div>
      </div>

      <div className="flex flex-col gap-3.5 px-2">
        <div className="flex h-[92px] gap-3.5">
          {row1.map((k) => <Key key={k} label={k} small />)}
          <DarkKey name="Backspace" className="flex-[212] justify-end bg-[#a5abb7] pb-3.5">
            <Icon w={44} h={48} sw={2.5}>
              <path d="M16,7H38Q42,7 42,11V37Q42,41 38,41H16Q13,41 11,38L3,27Q1,24 3,21L11,10Q13,7 16,7ZM19,17L32,31M32,17L19,31" />
            </Icon>
          </DarkKey>
        </div>
        <div className="flex h-[122px] gap-3.5">
          <DarkKey name="Tab" className="flex-[212] bg-[#a1a7b3] pb-3">
            <Icon w={42} h={48} sw={2.5}><path d="M1,24H36M22,10L36,24L22,38M39,10V38" /></Icon>
          </DarkKey>
          {row2.map((k) => <Key key={k} label={k} />)}
          <div className="flex-[126] rounded-t-xl rounded-bl-xl bg-[#007aff]" />
        </div>
        <div className="flex h-[122px] gap-3.5">
          <DarkKey name="Caps lock" className="flex-[238] bg-[#a1a7b3] pb-4">
            <Icon w={42} h={48} sw={2.5}>
              <path d="M21,4L40,22H31V30Q31,32 29,32H13Q11,32 11,30V22H2Z" />
              <rect x="11" y="36" width="20" height="7" rx="2" />
            </Icon>
          </DarkKey>
          {row3.map((k) => <Key key={k} label={k} />)}
          <button aria-label="Return" className="-mt-4 flex min-w-0 flex-[100] items-end justify-end rounded-b-xl bg-[#007aff] pb-4 text-white shadow-[0_2px_0_#5d6f8c]">
            <span className="flex pr-6">
              <Icon w={48} h={48} sw={2.5}><path d="M26,7H38Q43,7 43,12V24Q43,29 38,29H4M17,16L4,29L17,41" /></Icon>
            </span>
          </button>
        </div>
        <div className="flex h-[122px] gap-3.5">
          <DarkKey name="Shift" className="flex-[168] bg-[#a1a7b3] pb-3.5"><ShiftIcon /></DarkKey>
          {row4.map((k) => <Key key={k} label={k} />)}
          <DarkKey name="Right shift" className="flex-[310] justify-end bg-[#a7acb9] pb-3.5"><ShiftIcon /></DarkKey>
        </div>
        <div className="flex h-[122px] gap-3.5">
          <DarkKey name="Next keyboard" className="flex-[188] bg-[#a1a7b3] pb-4">
            <Icon w={42} h={48} sw={2.2}>
              <circle cx="20" cy="24" r="18.500" />
              <ellipse cx="20" cy="24" rx="10" ry="18.500" />
              <path d="M20,6V42M2,24H38M6,13Q20,21 34,13M6,35Q20,27 34,35" />
            </Icon>
          </DarkKey>
          <DarkKey name="Numbers" className="flex-[186] bg-[#a5abb7] pb-5 text-[33px] leading-10">.?123</DarkKey>
          <DarkKey name="Dictation" className="flex-[186] bg-[#a9aeba] pb-4">
            <Icon w={28} h={48} sw={2.5}>
              <rect x="7" y="4" width="13" height="26" rx="6.500" />
              <path d="M1.500,19V24Q2,35 13.500,35Q25,35 26,24V19M13.500,35V44M5,44H22" />
            </Icon>
          </DarkKey>
          <button aria-label="Space" className="flex-[830] rounded-xl bg-white shadow-[0_2px_0_#898b8f]" />
          <DarkKey name="More numbers" className="flex-[286] justify-end bg-[#a9aeba] pb-5 text-[33px] leading-10">.?123</DarkKey>
          <DarkKey name="Hide keyboard" className="flex-[286] justify-end bg-[#a7acb9] pb-3">
            <Icon w={50} h={48} sw={2.8}>
              <rect x="2" y="4" width="46" height="29" rx="5" />
              <path d="M8,12H42M8,19H42" strokeDasharray="3.200 2.800" strokeLinecap="butt" strokeWidth={3.2} />
              <path d="M8,26H11M15,26H35M39,26H42" strokeLinecap="butt" />
              <path d="M13,40L25,45L37,40" strokeWidth={3.4} />
            </Icon>
          </DarkKey>
        </div>
      </div>
    </section>
  );
}

export default function App() {
  return (
    <div className="flex h-screen flex-col overflow-hidden bg-[#282d34]">
      <TopBar />
      <div className="flex min-h-0 flex-1">
        <LeftToolbar />
        <NotePalette />
        <main className="flex min-w-0 flex-1 flex-col">
          <ScoreToolbar />
          <div className="relative min-h-0 flex-1 overflow-hidden bg-white">
            <Score />
            <TupletPopover />
          </div>
        </main>
        <RightToolbar />
      </div>
      <Keyboard />
    </div>
  );
}
